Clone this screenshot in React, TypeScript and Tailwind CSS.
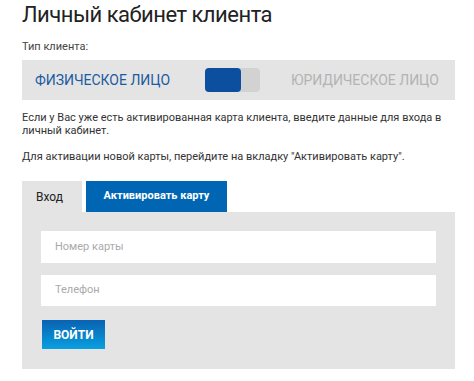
import React from "react";

export default function App() {
  return (
    <div className="bg-white w-[474px] h-[381px] pl-[22px] pr-[19px] font-['Roboto',sans-serif] text-[#333]">
      <h1 className="text-[22px] leading-[30px] font-normal tracking-[-0.5px] text-[#222] pt-0">Личный кабинет клиента</h1>
      <div className="mt-[10px] text-[11px] leading-[14px] text-[#444]">Тип клиента:</div>
      <div className="mt-[6px] h-[40px] bg-[#e4e4e4] flex items-center pl-[13px] pr-[16px]">
        <span className="text-[14px] text-[#1c5ba0]">ФИЗИЧЕСКОЕ ЛИЦО</span>
        <div className="ml-[35px] w-[55px] h-[24px] rounded-[4px] bg-[#d2d2d2] flex">
          <div className="w-[36px] h-[24px] rounded-[4px] bg-[#0b4f9e]" />
        </div>
        <span className="ml-auto text-[14px] text-[#b3b3b3]">ЮРИДИЧЕСКОЕ ЛИЦО</span>
      </div>
      <div className="mt-[11px] text-[11px] leading-[13px] text-[#333]">
        <p>Если у Вас уже есть активированная карта клиента, введите данные для входа в личный кабинет.</p>
        <p className="mt-[13px]">Для активации новой карты, перейдите на вкладку "Активировать карту".</p>
      </div>
      <div className="mt-[18px] flex">
        <div className="w-[60px] h-[31px] bg-[#e4e4e4] flex items-center pl-[14px] text-[12px] text-[#222]">Вход</div>
        <div className="ml-[4px] w-[141px] h-[31px] bg-[#0066b3] flex items-center justify-center text-[11px] font-bold text-white">Активировать карту</div>
      </div>
      <div className="bg-[#e4e4e4] pt-[19px] pl-[19px] pr-[19px] pb-[20px]">
        <div className="h-[32px] bg-white flex items-center pl-[14px] text-[11px] text-[#aaa]">Номер карты</div>
        <div className="mt-[12px] h-[31px] bg-white flex items-center pl-[14px] text-[11px] text-[#aaa]">Телефон</div>
        <button className="mt-[14px] ml-[1px] w-[63px] h-[29px] bg-gradient-to-b from-[#0a62b2] to-[#0aa0e0] text-white font-bold text-[12px] flex items-center justify-center">ВОЙТИ</button>
      </div>
    </div>
  );
}
